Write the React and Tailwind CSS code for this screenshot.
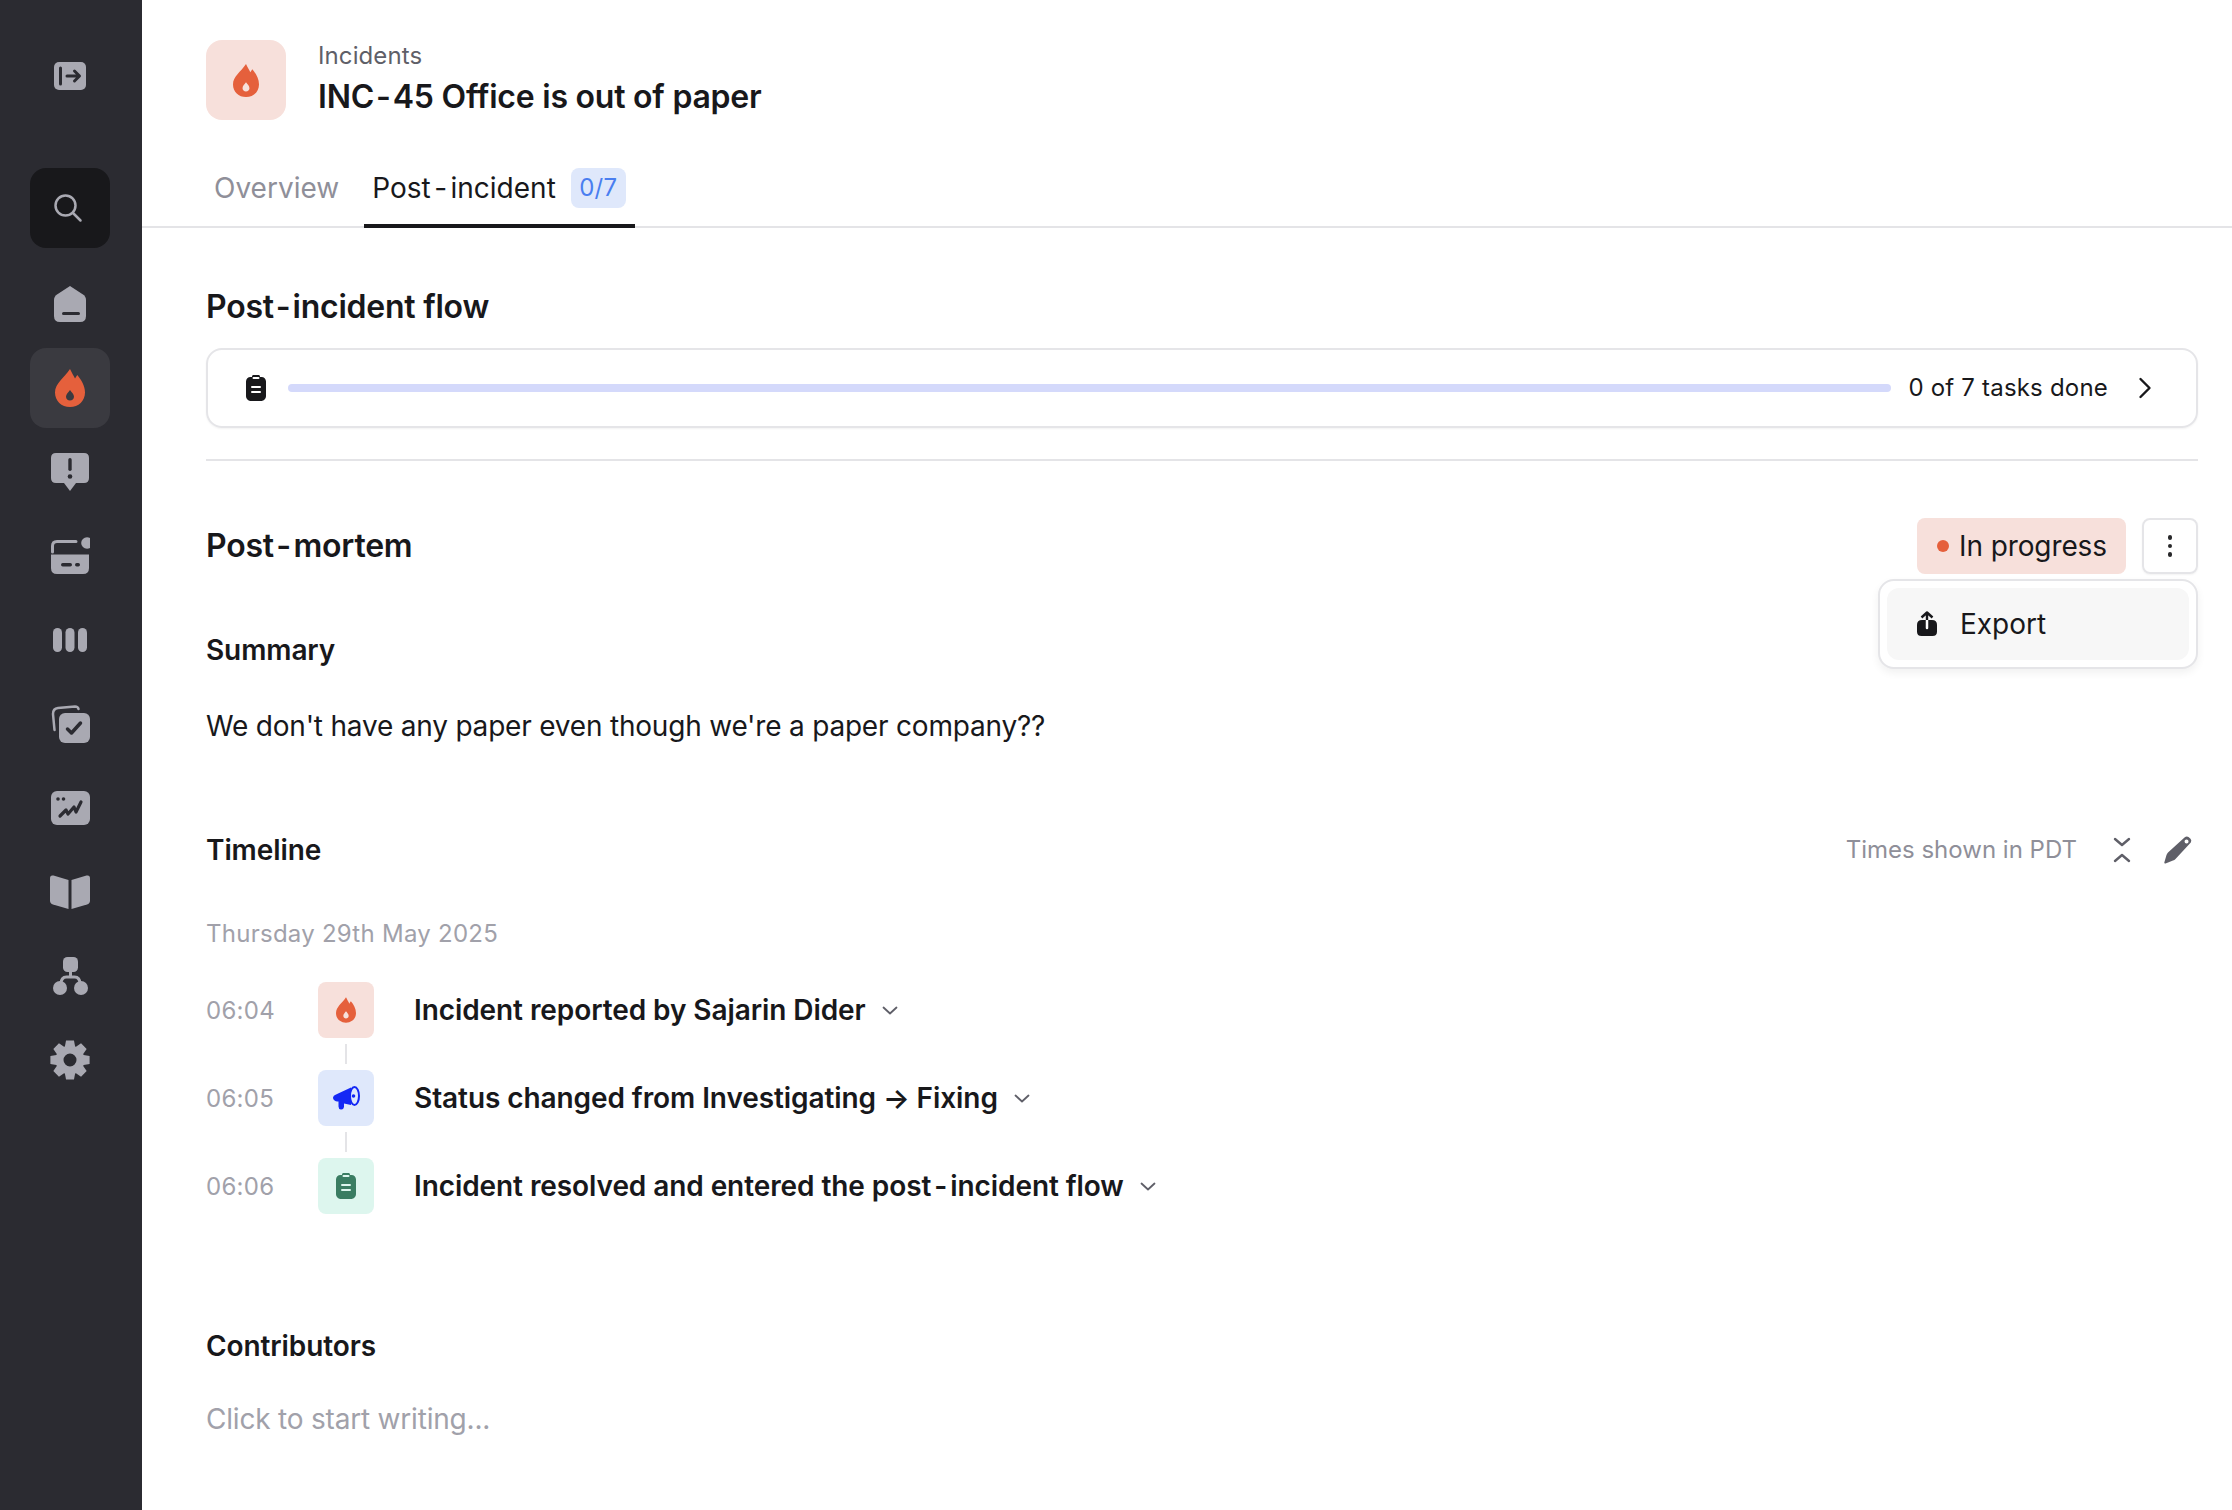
import React from "react";

const DARK = "#2b2b31";

const FLAME =
  "M15 0C17 4 18.5 6.5 20 9.5C20.7 8.3 21.5 7 22.3 6C26.5 11 30 17 30 23.5C30 32 23.5 38 15 38C6.5 38 0 32 0 23.5C0 14.5 9 9 15 0ZM15 21C13.4 23.4 11 25 11 27.8C11 30 12.8 31.6 15 31.6C17.2 31.6 19 30 19 27.8C19 25 16.6 23.4 15 21Z";

function Flame({ className }) {
  return (
    <svg viewBox="0 0 30 38" className={className} fill="#e5603c">
      <path d={FLAME} fillRule="evenodd" />
    </svg>
  );
}

function Clipboard({ className, fill, stripe }) {
  return (
    <svg viewBox="0 0 20 26" className={className}>
      <path
        d="M6 1.5C6 .7 6.7 0 7.5 0h5c.8 0 1.5.7 1.5 1.5V2h1.500C18 2 20 4 20 6.500V21c0 2.800-2.200 5-5 5H5c-2.800 0-5-2.200-5-5V6.500C0 4 2 2 4.500 2H6z"
        fill={fill}
      />
      <rect x="6.500" y="2" width="7" height="2" rx="1" fill={stripe} />
      <rect x="5" y="11" width="10" height="2" rx="1" fill={stripe} />
      <rect x="5" y="16" width="10" height="2" rx="1" fill={stripe} />
    </svg>
  );
}

function gearPath() {
  const teeth = 8;
  const out = 20;
  const inn = 14.5;
  let d = "";
  for (let i = 0; i < teeth; i++) {
    const a = (i * 2 * Math.PI) / teeth - Math.PI / 2;
    const pts = [
      [inn, a - 0.36],
      [out, a - 0.2],
      [out, a + 0.2],
      [inn, a + 0.36],
    ];
    pts.forEach(([r, t], j) => {
      const x = (20 + r * Math.cos(t)).toFixed(2);
      const y = (20 + r * Math.sin(t)).toFixed(2);
      d += i === 0 && j === 0 ? `M${x} ${y}` : `L${x} ${y}`;
    });
  }
  d += "Z M26.500 20A6.500 6.500 0 1 0 13.500 20A6.500 6.500 0 1 0 26.500 20Z";
  return d;
}

const G = "#a9a9b2";

function SideIcon({ children }) {
  return (
    <svg viewBox="0 0 40 40" className="w-10 h-10" fill={G}>
      {children}
    </svg>
  );
}

function NavItem({ active, search, children }) {
  return (
    <div
      className={`w-20 h-20 rounded-2xl flex items-center justify-center ${
        active ? "bg-[#3a3a40]" : search ? "bg-[#18181b]" : ""
      }`}
    >
      {children}
    </div>
  );
}

function Hy({ className }) {
  return <span className={className}>-</span>;
}

function Sidebar() {
  return (
    <aside className="w-[142px] shrink-0 bg-[#2b2b31] flex flex-col pl-[30px] pt-[56px]">
      <div className="h-10 w-20 flex items-center justify-center">
        <SideIcon>
          <rect x="4" y="6" width="32" height="28" rx="5" />
          <path d="M10.500 12v16" stroke={DARK} strokeWidth="3" strokeLinecap="round" />
          <path d="M17 20h12M24.500 15l5 5-5 5" stroke={DARK} strokeWidth="3" fill="none" strokeLinecap="round" strokeLinejoin="round" />
        </SideIcon>
      </div>
      <div className="mt-[72px]">
        <NavItem search>
          <svg viewBox="0 0 30 30" className="w-[30px] h-[30px] -ml-[4px]" fill="none" stroke={G} strokeWidth="2.500" strokeLinecap="round">
            <circle cx="12.500" cy="12.500" r="10" />
            <path d="M20 20l7.500 7.500" />
          </svg>
        </NavItem>
      </div>
      <div className="mt-4 flex flex-col gap-1">
        <NavItem>
          <SideIcon>
            <path d="M20 2L33 10.500Q36 12.500 36 16V32Q36 38 30 38H10Q4 38 4 32V16Q4 12.500 7 10.500Z" />
            <rect x="12" y="28" width="18" height="3" rx="1.500" fill={DARK} />
          </SideIcon>
        </NavItem>
        <NavItem active>
          <Flame className="w-[30px] h-[38px]" />
        </NavItem>
        <NavItem>
          <SideIcon>
            <path d="M6 1H34Q39 1 39 6V26Q39 31 34 31H26L20 39L14 31H6Q1 31 1 26V6Q1 1 6 1Z" />
            <rect x="18.300" y="6" width="3.400" height="13" rx="1.700" fill={DARK} />
            <circle cx="20" cy="24.500" r="2.300" fill={DARK} />
          </SideIcon>
        </NavItem>
        <NavItem>
          <SideIcon>
            <path d="M2.500 16V10Q2.500 5.500 7 5.500H26" fill="none" stroke={G} strokeWidth="3" strokeLinecap="round" />
            <circle cx="37" cy="7" r="5.800" />
            <path d="M1 18.500H39V32Q39 38 33 38H7Q1 38 1 32Z" />
            <rect x="11" y="27" width="11" height="3.500" rx="1.700" fill={DARK} />
            <rect x="25" y="27" width="5" height="3.500" rx="1.700" fill={DARK} />
          </SideIcon>
        </NavItem>
        <NavItem>
          <SideIcon>
            <rect x="3" y="8" width="9" height="24" rx="4.500" />
            <rect x="15.500" y="8" width="9" height="24" rx="4.500" />
            <rect x="28" y="8" width="9" height="24" rx="4.500" />
          </SideIcon>
        </NavItem>
        <NavItem>
          <SideIcon>
            <path d="M4.500 26L3 10Q3 4.500 8 4L25 2.500Q28 2.500 28.500 5" fill="none" stroke={G} strokeWidth="2.500" strokeLinecap="round" />
            <rect x="9" y="9" width="31" height="30" rx="6" />
            <path d="M17.500 25l4 4 9-10" fill="none" stroke={DARK} strokeWidth="3.500" strokeLinecap="round" strokeLinejoin="round" />
          </SideIcon>
        </NavItem>
        <NavItem>
          <SideIcon>
            <rect x="1" y="3" width="39" height="34" rx="6" />
            <circle cx="8" cy="11" r="1.800" fill={DARK} />
            <circle cx="13.500" cy="11" r="1.800" fill={DARK} />
            <path d="M10 28L16 22L18 26L24 19L26 24L31 14" fill="none" stroke={DARK} strokeWidth="3.200" strokeLinecap="round" strokeLinejoin="round" />
          </SideIcon>
        </NavItem>
        <NavItem>
          <SideIcon>
            <path d="M0 6.500Q0 2.800 3.500 3.600L18.500 8V37L3 32.500Q0 31.500 0 28.500Z" />
            <path d="M40 6.500Q40 2.800 36.500 3.600L21.500 8V37L37 32.500Q40 31.500 40 28.500Z" />
          </SideIcon>
        </NavItem>
        <NavItem>
          <SideIcon>
            <rect x="13" y="1" width="15" height="15" rx="4.500" />
            <path d="M20.500 15V20.500M11 28Q11 21 16.500 21H24.500Q30 21 30 28" fill="none" stroke={G} strokeWidth="3" />
            <circle cx="10" cy="32" r="7" />
            <circle cx="31" cy="32" r="7" />
          </SideIcon>
        </NavItem>
        <NavItem>
          <SideIcon>
            <path d={gearPath()} fillRule="evenodd" />
          </SideIcon>
        </NavItem>
      </div>
    </aside>
  );
}

function Chevron({ className }) {
  return (
    <svg viewBox="0 0 16 9" className={className} fill="none" stroke="#5f5f68" strokeWidth="1.800" strokeLinecap="round" strokeLinejoin="round">
      <path d="M1.500 1.500L8 7.500L14.500 1.500" />
    </svg>
  );
}

function Row({ time, box, icon, children }) {
  return (
    <div className="flex items-center h-14 relative">
      <div className="w-[112px] pt-0.5 text-[24px] tracking-[0.3px] text-[#a1a1aa]">{time}</div>
      <div className={`w-14 h-14 rounded-lg flex items-center justify-center ${box}`}>{icon}</div>
      <div className="ml-10 text-[28px] font-semibold tracking-[-0.08px] text-[#18181b]">{children}</div>
      <Chevron className="ml-4 w-4 h-[9px]" />
    </div>
  );
}

export default function App() {
  return (
    <div className="w-[2232px] h-[1510px] flex overflow-hidden bg-white font-['Inter',sans-serif] text-[#18181b]">
      <Sidebar />
      <main className="flex-1 min-w-0 flex flex-col">
        <header className="pt-10 pl-[64px] flex items-center gap-8">
          <div className="w-20 h-20 rounded-2xl bg-[#f7e0db] flex items-center justify-center">
            <Flame className="w-[26px] h-[33px]" />
          </div>
          <div className="flex flex-col h-20">
            <div className="text-[24px] leading-8 tracking-[0.1px] text-[#5f5f68]">Incidents</div>
            <div className="mt-[5px] text-[32px] leading-10 font-semibold tracking-[-0.23px]">
              INC<Hy className="mx-[2px]" />45 Office is out of paper
            </div>
          </div>
        </header>
        <nav className="mt-7 h-20 pl-[64px] flex border-b-2 border-[#e4e4e7]">
          <div className="h-20 px-2 flex items-center text-[28px] text-[#8f8f99]">Overview</div>
          <div className="ml-[17px] h-20 w-[271px] px-2 pt-1 flex items-center gap-[15px] text-[28px] border-b-4 border-[#18181b]">
            <span>
              Post<Hy className="mx-[3.5px]" />incident
            </span>
            <span className="h-10 w-[55px] rounded-lg bg-[#dfe8fb] text-[#4a7ef0] text-[24px] tracking-[0.3px] flex items-center justify-center">0/7</span>
          </div>
        </nav>
        <div className="pl-[64px] pr-[34px] flex flex-col">
          <h2 className="mt-[59px] h-10 flex items-center text-[32px] font-semibold tracking-[-0.23px] whitespace-pre">
            <span>
              Post<Hy className="mx-[2px]" />incident flow
            </span>
          </h2>
          <div className="mt-[21px] h-20 rounded-2xl border-2 border-[#e5e5e8] shadow-[0_1px_2px_rgba(0,0,0,0.05)] flex items-center pl-[38px] pr-[44px]">
            <Clipboard className="w-5 h-[26px]" fill="#18181b" stripe="#ffffff" />
            <div className="ml-[22px] flex-1 h-2 rounded-full bg-[#d4d9fb]" />
            <div className="ml-[17px] text-[24px] tracking-[0.2px] whitespace-nowrap">0 of 7 tasks done</div>
            <svg viewBox="0 0 14 22" className="ml-[30px] w-[14px] h-[22px]" fill="none" stroke="#18181b" strokeWidth="2.400" strokeLinecap="round" strokeLinejoin="round">
              <path d="M2.500 2L11.500 11L2.500 20" />
            </svg>
          </div>
          <div className="mt-[31px] h-0.5 bg-[#e4e4e7]" />
          <div className="mt-[57px] h-14 flex items-center justify-between relative">
            <h2 className="text-[32px] font-semibold tracking-[-0.23px]">
              Post<Hy className="mx-[2.5px]" />mortem
            </h2>
            <div className="flex items-center gap-4">
              <div className="h-14 w-[209px] rounded-lg bg-[#f7e0db] flex items-center pl-5 gap-2.5 text-[28px] tracking-[-0.1px]">
                <span className="w-3 h-3 rounded-full bg-[#e5603c]" />
                <span>In progress</span>
              </div>
              <div className="w-14 h-14 rounded-lg border-2 border-[#e5e5e8] shadow-[0_1px_2px_rgba(0,0,0,0.05)] flex flex-col items-center justify-center gap-1">
                <span className="w-[4.5px] h-[4.5px] rounded-full bg-[#27272a]" />
                <span className="w-[4.5px] h-[4.5px] rounded-full bg-[#27272a]" />
                <span className="w-[4.5px] h-[4.5px] rounded-full bg-[#27272a]" />
              </div>
            </div>
            <div className="absolute right-0 top-[61px] w-[320px] h-[90px] rounded-2xl border-2 border-[#e5e5e8] bg-white shadow-[0_4px_8px_rgba(0,0,0,0.06)] p-[7px]">
              <div className="h-[72px] rounded-xl bg-[#f7f7f7] flex items-center pl-[30px] gap-[23px] text-[28px]">
                <svg viewBox="0 0 20 26" className="w-5 h-[26px]">
                  <path d="M5 9H15Q20 9 20 14V20.500Q20 25 15.500 25H4.500Q0 25 0 20.500V14Q0 9 5 9Z" fill="#18181b" />
                  <path d="M10 9V17" stroke="#ffffff" strokeWidth="2.500" strokeLinecap="round" fill="none" />
                  <path d="M10 9V2M4.500 6.500L10 1.500L15.500 6.500" stroke="#18181b" strokeWidth="2.400" fill="none" strokeLinejoin="round" />
                </svg>
                <span>Export</span>
              </div>
            </div>
          </div>
          <h3 className="mt-14 h-10 flex items-center text-[28px] font-semibold tracking-[-0.1px]">Summary</h3>
          <p className="mt-9 h-10 flex items-center text-[28px] tracking-[-0.2px]">We don't have any paper even though we're a paper company??</p>
          <div className="mt-[84px] h-10 flex items-center justify-between">
            <h3 className="text-[28px] font-semibold tracking-[-0.1px]">Timeline</h3>
            <div className="flex items-center">
              <span className="text-[24px] text-[#8f8f99]">Times shown in PDT</span>
              <svg viewBox="0 0 18 26" className="ml-[36px] w-[18px] h-[26px]" fill="none" stroke="#5f5f68" strokeWidth="2.400" strokeLinecap="round" strokeLinejoin="round">
                <path d="M2 2L9 8L16 2M2 24L9 18L16 24" />
              </svg>
              <svg viewBox="0 0 28 28" className="ml-[33px] mr-[6px] w-7 h-7">
                <path fillRule="evenodd" d="M20.500 1.500Q22.500 0 24.500 1L26.500 2.800Q28 4.500 26.800 6.500L11.500 23Q10.500 24 9 24.500L1.500 27.500Q.2 27.800.3 26.500L2.500 19Q3 17.500 4 16.500ZM22.500 3.500A2 2 0 1 0 22.600 7.500A2 2 0 1 0 22.500 3.500Z" fill="#5f5f68" />
              </svg>
            </div>
          </div>
          <div className="mt-11 h-10 flex items-center text-[24px] tracking-[0.26px] text-[#a1a1aa]">Thursday 29th May 2025</div>
          <div className="mt-7 flex flex-col gap-8 relative">
            <Row time="06:04" box="bg-[#f7e0db]" icon={<Flame className="w-5 h-[26px]" />}>
              Incident reported by Sajarin Dider
            </Row>
            <div className="absolute left-[139px] top-[62px] w-0.5 h-5 bg-[#e4e4e7]" />
            <Row
              time="06:05"
              box="bg-[#dfe8fb]"
              icon={
                <svg viewBox="0 0 27 24" className="w-[27px] h-6">
                  <path d="M3 8.500L18 1.500V19L11 17.500L11 21Q10.500 23.800 7.800 23.500Q5.500 23 5.500 20.500V15.500H4Q0 14.500 0 11.500Q.2 9.500 3 8.500Z" fill="#1428f5" />
                  <ellipse cx="21.500" cy="10" rx="4.500" ry="9" fill="#dfe8fb" stroke="#1428f5" strokeWidth="2" />
                  <circle cx="20.500" cy="10" r="1.800" fill="#1428f5" />
                </svg>
              }
            >
              Status changed from Investigating → Fixing
            </Row>
            <div className="absolute left-[139px] top-[150px] w-0.5 h-5 bg-[#e4e4e7]" />
            <Row time="06:06" box="bg-[#ddf6ee]" icon={<Clipboard className="w-5 h-[26px]" fill="#3a7d62" stripe="#ddf6ee" />}>
              Incident resolved and entered the post<Hy className="mx-[3px]" />incident flow
            </Row>
          </div>
          <h3 className="mt-[112px] h-10 flex items-center text-[28px] font-semibold tracking-[-0.1px]">Contributors</h3>
          <div className="mt-[33px] h-10 flex items-center text-[28px] tracking-[-0.2px] text-[#a1a1aa]">Click to start writing...</div>
        </div>
      </main>
    </div>
  );
}
